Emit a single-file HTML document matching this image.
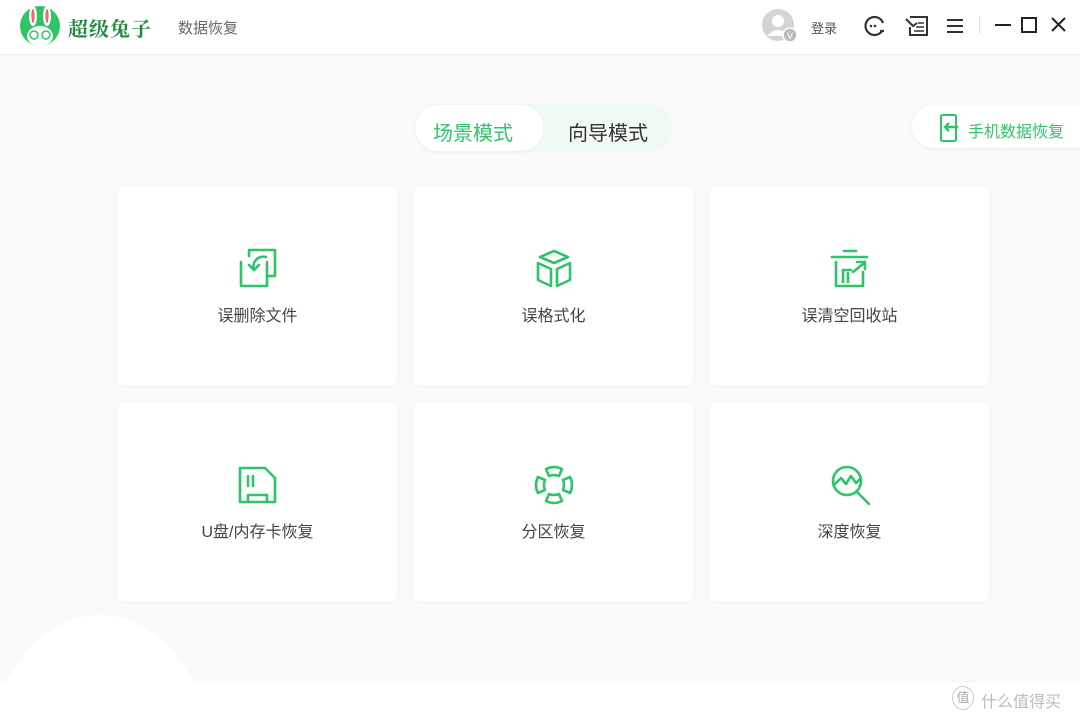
<!DOCTYPE html>
<html><head><meta charset="utf-8"><style>
*{margin:0;padding:0;box-sizing:border-box}
html,body{width:1080px;height:719px;overflow:hidden}
body{background:#fff;font-family:"Liberation Sans","Noto Sans CJK SC",sans-serif;position:relative}
.main{position:absolute;left:0;top:55px;width:1080px;height:628px;background:#f9f9f9;overflow:hidden}
.hdr{position:absolute;left:0;top:0;width:1080px;height:55px;background:#fff;border-bottom:1px solid #f0f0f0}
.card{position:absolute;width:279px;height:199px;background:#fff;border-radius:6px;box-shadow:0 0 6px rgba(0,0,0,.03)}
.card svg{position:absolute;left:119px;top:62px}
.card span{position:absolute;left:0;right:0;top:116px;text-align:center;font-size:16px;color:#444}
.g{stroke:#2fc46a;fill:none;stroke-width:2.6;stroke-linejoin:round;stroke-linecap:round}
</style></head><body>
<div class="hdr">
  <svg style="position:absolute;left:19px;top:4px" width="42" height="44" viewBox="0 0 42 44">
    <circle cx="21" cy="22" r="20" fill="#2fc46a"/>
    <ellipse cx="14" cy="12" rx="4" ry="10" fill="#fff"/><ellipse cx="28" cy="12" rx="4" ry="10" fill="#fff"/>
    <ellipse cx="14" cy="12" rx="1.6" ry="7" fill="#e86a7a"/><ellipse cx="28" cy="12" rx="1.6" ry="7" fill="#e86a7a"/>
    <ellipse cx="21" cy="32" rx="13" ry="10" fill="#fff"/>
    <circle cx="15" cy="31" r="4" fill="none" stroke="#2fc46a" stroke-width="1.5"/><circle cx="27" cy="31" r="4" fill="none" stroke="#2fc46a" stroke-width="1.5"/>
  </svg>
  <div style="position:absolute;left:68px;top:13px;font-size:20px;font-weight:bold;color:#1f8a3c;font-family:'Noto Serif CJK SC',serif;letter-spacing:1px">超级兔子</div>
  <div style="position:absolute;left:178px;top:17px;font-size:15px;color:#666">数据恢复</div>
  <svg style="position:absolute;left:762px;top:9px" width="38" height="34" viewBox="0 0 38 34">
    <circle cx="16" cy="16" r="16" fill="#d4d4d4"/><circle cx="16" cy="12" r="6" fill="#fff"/><path d="M5 27 Q16 15 27 27" fill="#fff"/>
    <circle cx="28" cy="26" r="7" fill="#bbb" stroke="#fff" stroke-width="1.5"/><text x="25" y="30" font-size="9" fill="#fff">V</text>
  </svg>
  <div style="position:absolute;left:811px;top:18px;font-size:13px;color:#555">登录</div>
  <svg style="position:absolute;left:862px;top:14px" width="26" height="24" viewBox="0 0 26 24"><path d="M20 17 A9 9 0 1 1 21 9" stroke="#333" stroke-width="2.2" fill="none"/><circle cx="9" cy="12" r="1.3" fill="#333"/><circle cx="13" cy="12" r="1.3" fill="#333"/><path d="M18 17 H22" stroke="#333" stroke-width="2.2"/></svg>
  <svg style="position:absolute;left:904px;top:14px" width="26" height="24" viewBox="0 0 26 24"><path d="M6 3 H23 V21 H6 V13" stroke="#333" stroke-width="2" fill="none"/><path d="M2 5 L9 12 L13 9" stroke="#333" stroke-width="2" fill="none"/><path d="M14 9H20M12 13H20M10 17H20" stroke="#333" stroke-width="1.5"/></svg>
  <svg style="position:absolute;left:945px;top:16px" width="20" height="20"><path d="M2 4H18M2 10H18M2 16H18" stroke="#333" stroke-width="2"/></svg>
  <div style="position:absolute;left:979px;top:16px;width:1px;height:18px;background:#ddd"></div>
  <svg style="position:absolute;left:993px;top:15px" width="82" height="20"><path d="M2 10H18" stroke="#222" stroke-width="2"/><rect x="29" y="3" width="14" height="14" fill="none" stroke="#222" stroke-width="2"/><path d="M59 3L72 16M72 3L59 16" stroke="#222" stroke-width="2"/></svg>
</div>
<div class="main">
  <div style="position:absolute;left:-12px;top:560px;width:224px;height:150px;background:#fff;border-radius:50% 50% 0 0/100% 100% 0 0"></div>
  <div style="position:absolute;left:413px;top:48px;width:258px;height:50px;background:#effaf3;border-radius:25px"></div>
  <div style="position:absolute;left:415px;top:50px;width:128px;height:46px;background:#fff;border-radius:23px;box-shadow:0 1px 4px rgba(0,0,0,.04)"></div>
  <div style="position:absolute;left:433px;top:62px;font-size:20px;color:#2fc46a">场景模式</div>
  <div style="position:absolute;left:568px;top:62px;font-size:20px;color:#333">向导模式</div>
  <div style="position:absolute;left:912px;top:51px;width:190px;height:42px;background:#fff;border-radius:21px;box-shadow:0 1px 4px rgba(0,0,0,.05)"></div>
  <svg style="position:absolute;left:938px;top:58px" width="24" height="30" viewBox="0 0 24 30"><rect x="3" y="2" width="15" height="26" rx="1.5" fill="none" stroke="#2fc46a" stroke-width="2"/><path d="M20 14H8M11 10L7 14L11 18" stroke="#2fc46a" stroke-width="2.4" fill="none"/></svg>
  <div style="position:absolute;left:968px;top:63px;font-size:16px;color:#2fc46a">手机数据恢复</div>

  <div class="card" style="left:118px;top:131px"><svg width="42" height="42" viewBox="0 0 42 42"><path class="g" d="M12 8V2H38V28H30"/><path class="g" d="M4 14V38H30V14"/><path class="g" d="M29 9 A10 10 0 0 0 17 22"/><path class="g" d="M12 17 L17 22 L22 17"/></svg><span>误删除文件</span></div>
  <div class="card" style="left:414px;top:131px"><svg width="42" height="42" viewBox="0 0 42 42"><path class="g" d="M21 3 L35 9 L21 15 L7 9 Z"/><path class="g" d="M5 15 L18 21 V38 L5 32 Z"/><path class="g" d="M37 15 L24 21 V38 L37 32 Z"/></svg><span>误格式化</span></div>
  <div class="card" style="left:710px;top:131px"><svg width="42" height="42" viewBox="0 0 42 42"><path class="g" d="M3 9H38M15 3H27"/><path class="g" d="M7 14V38H34V24"/><path class="g" d="M14 34V22H22 M19 34V25"/><path class="g" d="M24 24 L34 16 M28 14H36V21"/></svg><span>误清空回收站</span></div>
  <div class="card" style="left:118px;top:347px"><svg width="42" height="42" viewBox="0 0 42 42"><path class="g" d="M3 4H28L38 14V38H3Z"/><path class="g" d="M11 12V22M16 12V22"/><path class="g" d="M11 38V31H30V38"/></svg><span>U盘/内存卡恢复</span></div>
  <div class="card" style="left:414px;top:347px"><svg width="42" height="42" viewBox="0 0 42 42"><path class="g" d="M13 5Q21 1 29 5L26 12Q21 10 16 12Z"/><path class="g" d="M13 37Q21 41 29 37L26 30Q21 32 16 30Z"/><path class="g" d="M5 13Q1 21 5 29L12 26Q10 21 12 16Z"/><path class="g" d="M37 13Q41 21 37 29L30 26Q32 21 30 16Z"/></svg><span>分区恢复</span></div>
  <div class="card" style="left:710px;top:347px"><svg width="44" height="44" viewBox="0 0 44 44"><circle class="g" cx="18" cy="17" r="14"/><path class="g" d="M5 21 L12 14 L17 20 L22 12 L27 19 L32 14"/><path class="g" d="M28 28 L40 40"/></svg><span>深度恢复</span></div>
</div>
<div style="position:absolute;left:952px;top:686px;width:22px;height:24px;border:1px solid #ccc;border-radius:50%;font-size:13px;color:#aaa;text-align:center;line-height:22px">值</div>
<div style="position:absolute;left:981px;top:688px;font-size:16px;color:#bbb">什么值得买</div>
</body></html>
